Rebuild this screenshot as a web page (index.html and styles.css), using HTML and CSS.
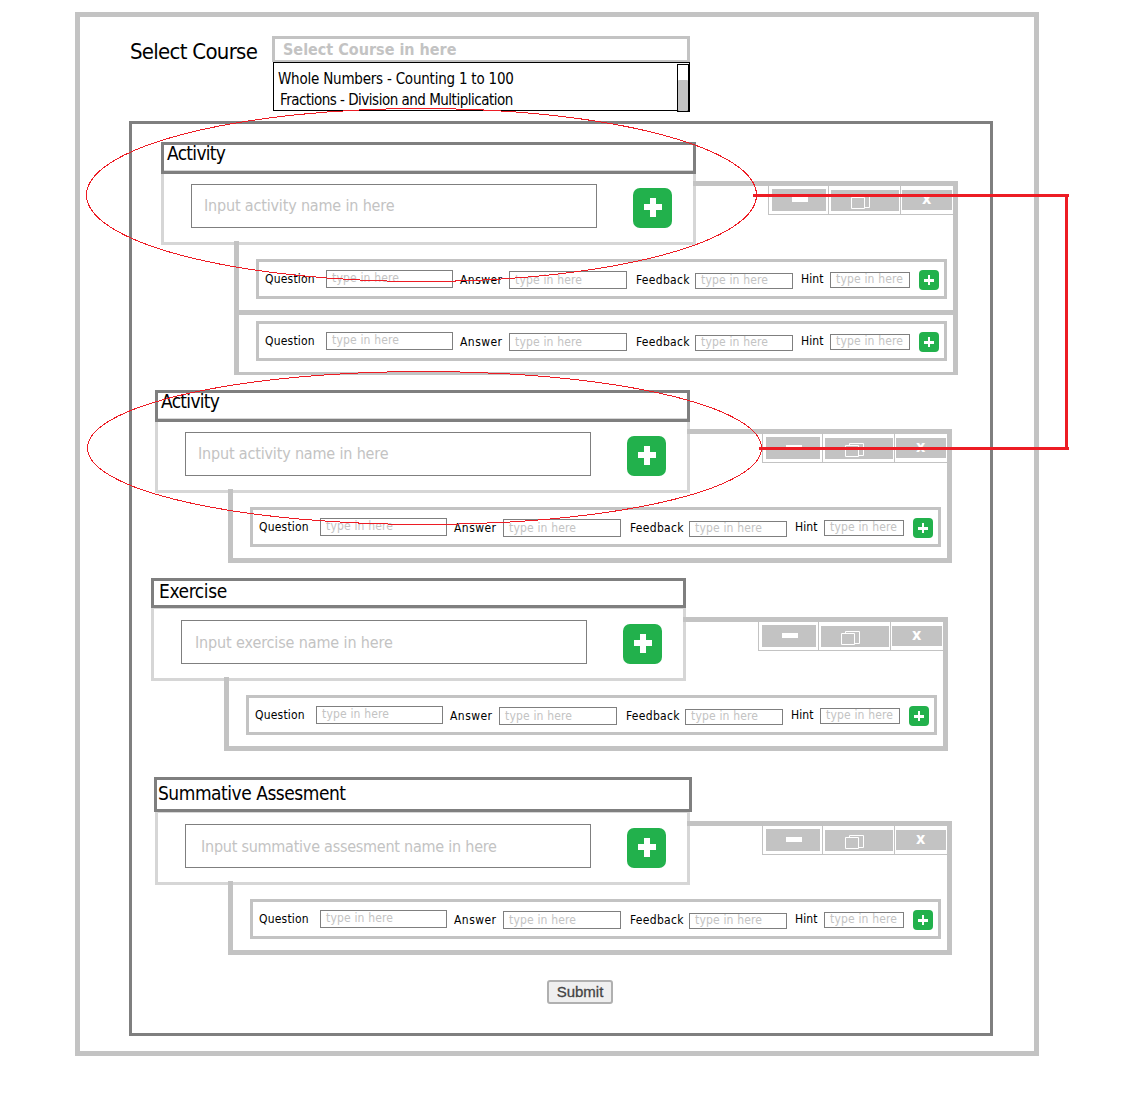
FILE: index.html
```html
<!DOCTYPE html>
<html lang="en">
<head>
<meta charset="utf-8">
<title>Course builder</title>
<link rel="stylesheet" href="styles.css">
</head>
<body>
<svg class="defs" width="0" height="0" aria-hidden="true">
  <symbol id="add" viewBox="0 0 39 40"><rect class="green" width="39" height="40" rx="7"/><path class="white" d="M17 10h6v6h6v6h-6v7h-6v-7h-6v-6h6z"/></symbol>
  <symbol id="add-small" viewBox="0 0 20 20"><rect class="green" width="20" height="20" rx="4"/><path class="white" d="M9 5h2v4h4v3h-4v3h-2v-3h-4v-3h4z"/></symbol>
  <symbol id="restore" viewBox="0 0 68 21"><path class="line" d="M24.500 7V5.500H38.500V17.500H34M20.500 7.500H33.500V18.500H20.500Z"/></symbol>
</svg>
<main class="frame">
  <header class="course">
    <label class="course-label">Select Course</label>
    <div class="picker">
      <div class="picker-field"><span>Select Course in here</span></div>
      <div class="picker-list">
        <div class="options"><span class="opt opt-a">Whole Numbers - Counting 1 to 100</span><span class="opt opt-b">Fractions - Division and Multiplication</span></div>
        <div class="scroll"><div class="thumb"></div></div>
      </div>
    </div>
  </header>
  <div class="panel">
    <section class="section first">
      <h2 class="title"><span class="t-act">Activity</span></h2>
      <div class="body">
        <div class="card"><div class="name"><span class="n-act">Input activity name in here</span></div><svg class="add"><use href="#add"/></svg></div>
        <div class="top"><div class="controls"><b class="c-min"><i></i></b><b class="c-res"><svg><use href="#restore"/></svg></b><b class="c-close"><i>x</i></b></div></div>
        <div class="rows double">
          <div class="row"><span class="l q">Question</span><span class="f fq">type in here</span><span class="l a">Answer</span><span class="f fa">type in here</span><span class="l b">Feedback</span><span class="f fb">type in here</span><span class="l h">Hint</span><span class="f fh">type in here</span><svg class="add-small"><use href="#add-small"/></svg></div>
          <div class="divider"></div>
          <div class="row"><span class="l q">Question</span><span class="f fq">type in here</span><span class="l a">Answer</span><span class="f fa">type in here</span><span class="l b">Feedback</span><span class="f fb">type in here</span><span class="l h">Hint</span><span class="f fh">type in here</span><svg class="add-small"><use href="#add-small"/></svg></div>
        </div>
      </div>
    </section>
    <section class="section second">
      <h2 class="title"><span class="t-act">Activity</span></h2>
      <div class="body">
        <div class="card"><div class="name"><span class="n-act">Input activity name in here</span></div><svg class="add"><use href="#add"/></svg></div>
        <div class="top"><div class="controls"><b class="c-min"><i></i></b><b class="c-res"><svg><use href="#restore"/></svg></b><b class="c-close"><i>x</i></b></div></div>
        <div class="rows">
          <div class="row"><span class="l q">Question</span><span class="f fq">type in here</span><span class="l a">Answer</span><span class="f fa">type in here</span><span class="l b">Feedback</span><span class="f fb">type in here</span><span class="l h">Hint</span><span class="f fh">type in here</span><svg class="add-small"><use href="#add-small"/></svg></div>
        </div>
      </div>
    </section>
    <section class="section exercise">
      <h2 class="title"><span class="t-ex">Exercise</span></h2>
      <div class="body">
        <div class="card"><div class="name"><span class="n-ex">Input exercise name in here</span></div><svg class="add"><use href="#add"/></svg></div>
        <div class="top"><div class="controls"><b class="c-min"><i></i></b><b class="c-res"><svg><use href="#restore"/></svg></b><b class="c-close"><i>x</i></b></div></div>
        <div class="rows">
          <div class="row"><span class="l q">Question</span><span class="f fq">type in here</span><span class="l a">Answer</span><span class="f fa">type in here</span><span class="l b">Feedback</span><span class="f fb">type in here</span><span class="l h">Hint</span><span class="f fh">type in here</span><svg class="add-small"><use href="#add-small"/></svg></div>
        </div>
      </div>
    </section>
    <section class="section summative">
      <h2 class="title"><span class="t-sum">Summative Assesment</span></h2>
      <div class="body">
        <div class="card"><div class="name"><span class="n-sum">Input summative assesment name in here</span></div><svg class="add"><use href="#add"/></svg></div>
        <div class="top"><div class="controls"><b class="c-min"><i></i></b><b class="c-res"><svg><use href="#restore"/></svg></b><b class="c-close"><i>x</i></b></div></div>
        <div class="rows">
          <div class="row"><span class="l q">Question</span><span class="f fq">type in here</span><span class="l a">Answer</span><span class="f fa">type in here</span><span class="l b">Feedback</span><span class="f fb">type in here</span><span class="l h">Hint</span><span class="f fh">type in here</span><svg class="add-small"><use href="#add-small"/></svg></div>
        </div>
      </div>
    </section>
    <button class="submit" type="button">Submit</button>
  </div>
</main>
<svg class="marks" viewBox="0 0 1126 1108" aria-hidden="true">
  <ellipse cx="421.500" cy="195" rx="335" ry="86.500"/>
  <ellipse cx="424.500" cy="448" rx="337" ry="76.500"/>
  <path d="M753 195.500H1069M1066.500 195V449M759 448.500H1069"/>
</svg>
</body>
</html>
```
FILE: styles.css
```css
* { box-sizing: border-box; }
body {
  margin: 0;
  width: 1126px;
  height: 1108px;
  padding: 12px 0 0 75px;
  overflow: hidden;
  position: relative;
  background: #fff;
  color: #000;
  font-family: "DejaVu Sans Condensed", "DejaVu Sans", sans-serif;
  font-stretch: condensed;
}
span, label, i { white-space: nowrap; }
svg { display: block; }
.defs { position: absolute; }
.green { fill: #22b14c; }
.white { fill: #fff; shape-rendering: crispEdges; }
.line { fill: none; stroke: #fff; }

.frame {
  width: 964px;
  height: 1044px;
  border: 5px solid #c3c3c3;
  padding: 19px 0 0 49px;
}

/* course picker */
.course { display: flex; height: 85px; }
.course-label { width: 143px; padding: 2px 0 0 1px; font-size: 22px; line-height: 28px; letter-spacing: -0.72px; }
.picker { width: 418px; }
.picker-field {
  height: 26px;
  border: 3px solid #c3c3c3;
  border-bottom-width: 2px;
  padding-left: 8px;
  color: #c3c3c3;
  font-size: 16px;
  font-weight: bold;
  line-height: 22px;
}
.picker-list { display: flex; height: 49px; margin-left: 1px; border: 1px solid #000; }
.options { display: flex; flex-direction: column; width: 403px; padding: 6px 0 0 4px; flex: none; }
.opt { height: 21px; font-size: 15px; line-height: 21px; }
.opt-a { letter-spacing: -0.22px; }
.opt-b { padding-left: 2px; letter-spacing: -0.5px; }
.scroll { width: 13px; height: 48px; margin-top: 1px; border: 1px solid #000; border-right-width: 2px; padding-top: 15px; flex: none; }
.thumb { height: 31px; background: #c3c3c3; border-radius: 1px; }

/* builder panel */
.panel { width: 864px; height: 915px; border: 3px solid #7f7f7f; padding-top: 18px; }
.section { width: 797px; }
.first { margin-left: 29px; }
.second { margin: 15px 0 0 23px; }
.exercise { margin: 15px 0 0 19px; }
.summative { margin: 26px 0 0 23px; }
.title {
  position: relative;
  z-index: 1;
  width: 535px;
  height: 32px;
  margin: 0 0 -4px;
  border: 3px solid #7f7f7f;
  padding-left: 3px;
  font-size: 19px;
  font-weight: normal;
  line-height: 17px;
  letter-spacing: -0.7px;
}
.exercise .title { height: 30px; margin-bottom: -2px; padding-left: 5px; line-height: 21px; letter-spacing: -0.4px; }
.summative .title { width: 538px; height: 35px; margin: 0 0 -2px -1px; padding-left: 1px; line-height: 27px; letter-spacing: -0.48px; }

.body { display: grid; grid-template-columns: 73px 459px 3px 262px; grid-template-rows: 11px 60px 4px auto; }
.card {
  grid-area: 1 / 1 / 4 / 4;
  display: flex;
  height: 75px;
  border: 3px solid #d6d6d6;
  padding: 11px 0 0 27px;
}
.name {
  width: 406px;
  height: 44px;
  border: 1px solid #7f7f7f;
  padding-left: 12px;
  color: #c3c3c3;
  font-size: 16px;
  line-height: 42px;
  letter-spacing: -0.17px;
}
.exercise .name { padding-left: 13px; line-height: 44px; letter-spacing: -0.13px; }
.summative .name { padding-left: 15px; line-height: 43px; letter-spacing: -0.24px; }
.add { width: 39px; height: 40px; margin: 4px 0 0 36px; }

.top {
  grid-area: 2 / 3 / 4 / 5;
  display: flex;
  justify-content: flex-end;
  border: solid #c3c3c3;
  border-width: 5px 5px 0 0;
}
.controls { display: flex; width: 185px; height: 29px; border: solid #c3c3c3; border-width: 0 0 1px 1px; }
.controls b { display: block; background: #c3c3c3; background-clip: content-box; }
.c-min { width: 60px; height: 28px; padding: 3px 2px 3px 3px; border-right: 1px solid #c3c3c3; }
.c-min i { display: block; width: 16px; height: 5px; margin: 8px 0 0 20px; background: #fff; }
.c-res { width: 72px; height: 28px; padding: 4px 1px 3px 2px; border-right: 1px solid #c3c3c3; }
.c-res svg { width: 68px; height: 21px; }
.c-close { width: 52px; height: 28px; padding: 4px 1px; color: #fff; }
.c-close i { display: block; font: bold 16px/18px "DejaVu Sans Condensed", "DejaVu Sans", sans-serif; padding-left: 20px; }

.rows {
  grid-area: 3 / 2 / 5 / 5;
  border: solid #c3c3c3;
  border-width: 0 5px 5px;
  padding: 18px 6px 11px 17px;
}
.double { border-bottom-width: 3px; }
.divider { height: 5px; margin: 11px -6px 6px -17px; background: #c3c3c3; }
.row {
  display: grid;
  grid-template-columns: 67px 127px 56px 118px 68px 98px 37px 80px 29px;
  align-items: start;
  height: 40px;
  border: 3px solid #c3c3c3;
  font-size: 12px;
  line-height: 14px;
}
.q { margin-top: 10px; padding-left: 6px; letter-spacing: 0.2px; }
.a { margin-top: 11px; padding-left: 7px; letter-spacing: 0.45px; }
.b { margin-top: 11px; padding-left: 9px; letter-spacing: 0.3px; }
.h { margin-top: 10px; padding-left: 8px; letter-spacing: 0.1px; }
.f { border: 1px solid #7f7f7f; padding-left: 5px; color: #c3c3c3; letter-spacing: 0.17px; }
.fq { height: 18px; margin-top: 8px; }
.fa { height: 18px; margin-top: 9px; line-height: 16px; }
.fb { height: 16px; margin-top: 11px; line-height: 12px; }
.fh { height: 16px; margin-top: 10px; line-height: 12px; }
.add-small { width: 20px; height: 20px; margin: 8px 0 0 9px; }

.submit {
  display: block;
  width: 66px;
  height: 24px;
  margin: 25px 0 0 415px;
  border: 2px solid #b0b0b0;
  border-radius: 3px;
  padding: 0;
  background: #efefef;
  color: #444;
  font: 15px/20px "Liberation Sans", Arial, sans-serif;
  -webkit-text-stroke: 0.3px #444;
}

/* review annotations over the page */
.marks { position: absolute; left: 0; top: 0; width: 1126px; height: 1108px; fill: none; stroke: #ed1c24; shape-rendering: crispEdges; pointer-events: none; z-index: 2; }
.marks path { stroke-width: 3; }
```
